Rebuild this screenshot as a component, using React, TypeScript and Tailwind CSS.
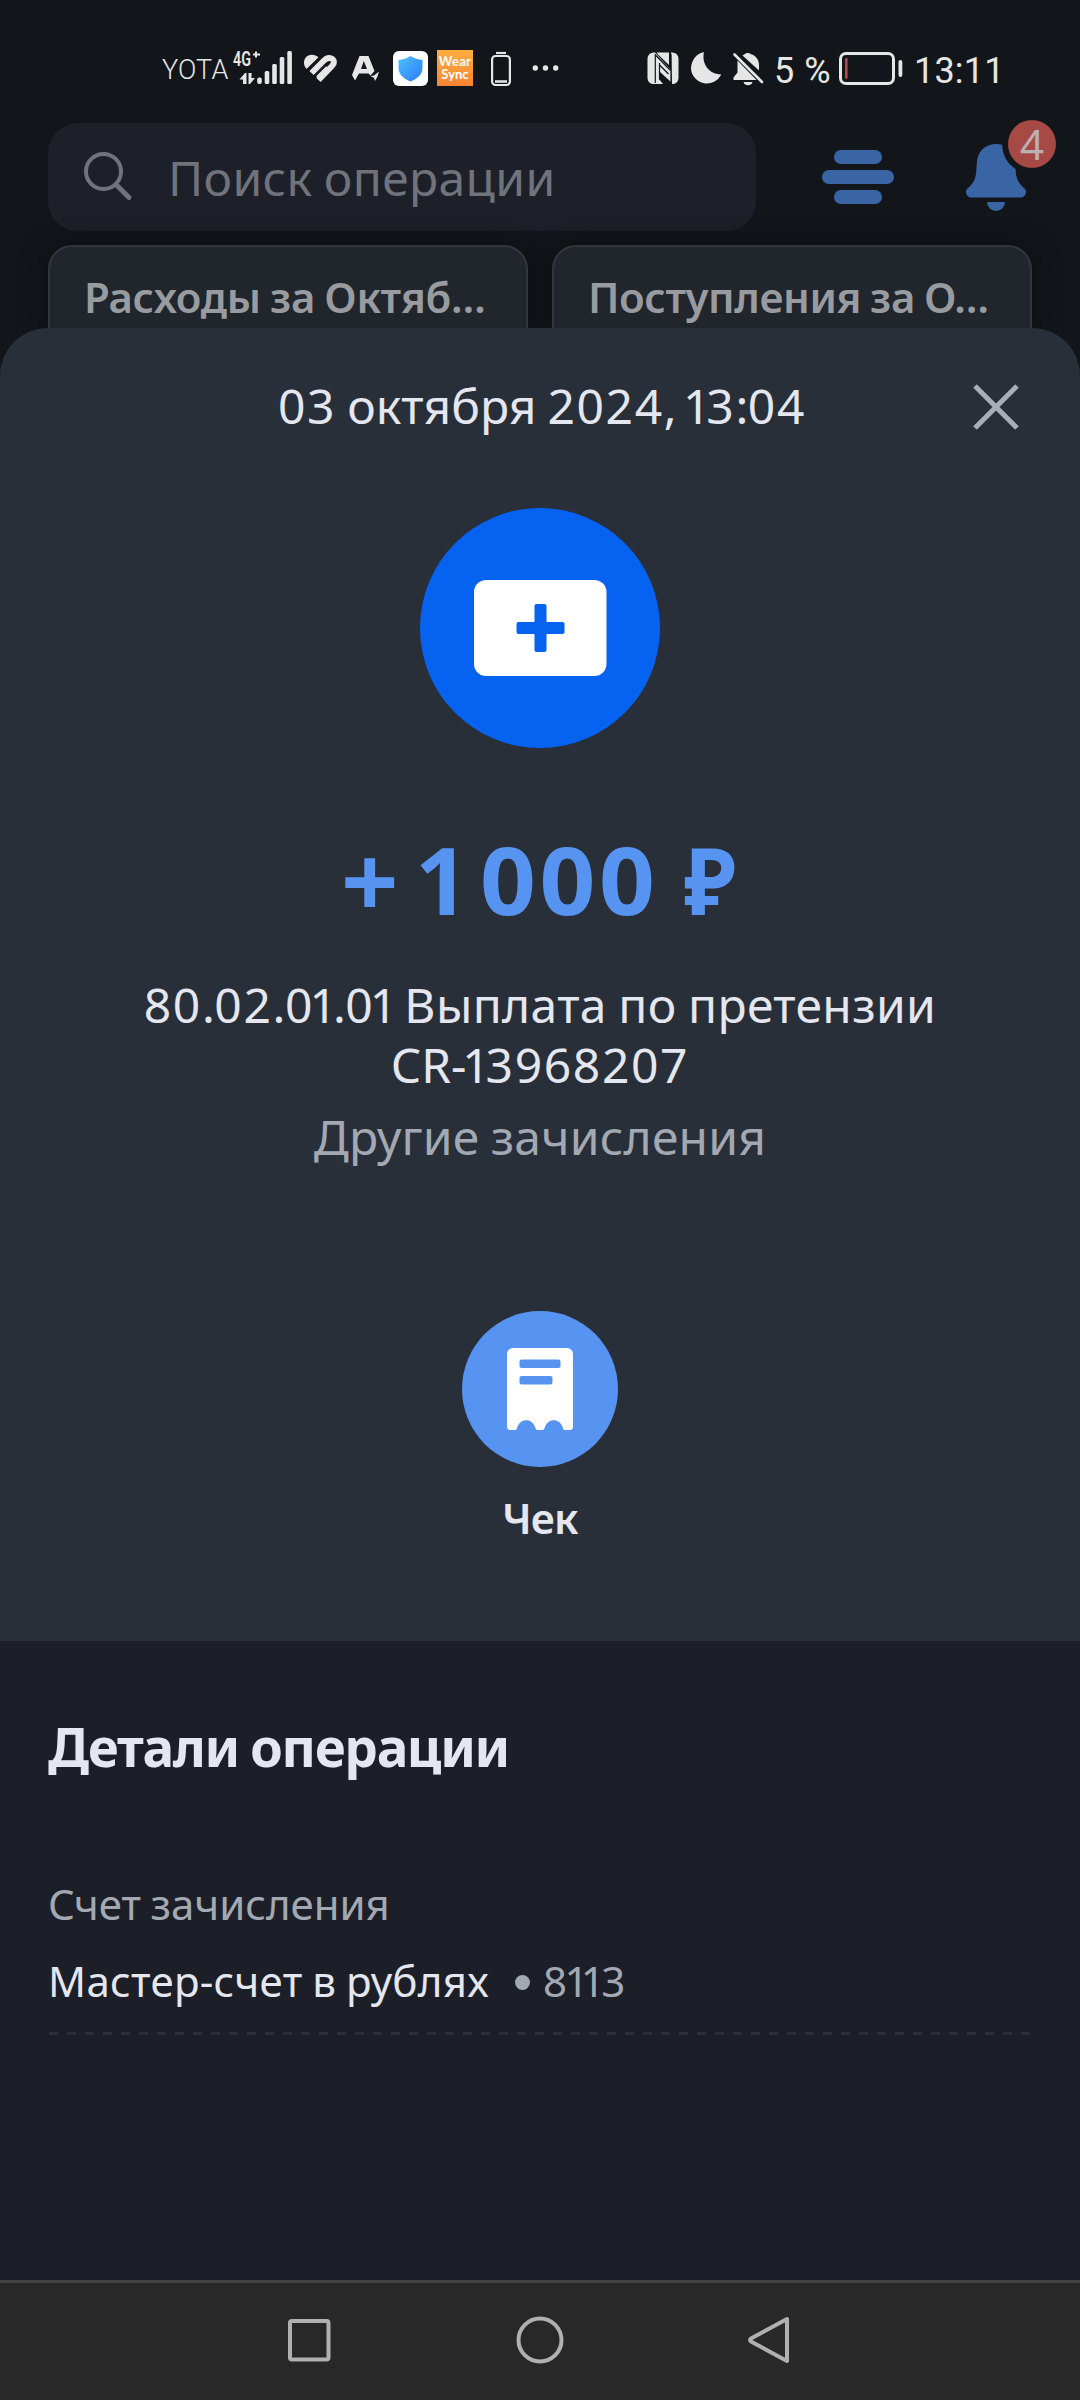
import type { ReactNode } from 'react'

// Figures are slightly spaced, while "1" and punctuation are set tighter.
function trackingFor(char: string, next?: string) {
	if (char === '1') return next === '1' ? 'tracking-[-0.185em]' : 'tracking-[-0.085em]'
	if (/\D/.test(char)) return next === '1' ? 'tracking-[-0.09em]' : 'tracking-[-0.01em]'
	return next === '1' ? 'tracking-[-0.06em]' : ''
}

function Digits({ children }: { children: string }) {
	return (
		<span className="tracking-[0.034em]">
			{children.split('').map((char, i) => {
				const tracking = trackingFor(char, children[i + 1])
				return tracking ? <span key={i} className={tracking}>{char}</span> : char
			})}
		</span>
	)
}

function StatusBar() {
	return (
		<div className="h-[123px] pt-[46px] flex items-start text-[#e6e6e6] font-[Roboto,sans-serif] [word-spacing:normal]">
			<span className="ml-[162px] w-[68px] text-[27px] leading-[48px] font-light tracking-[0.2px]">YOTA</span>
			<svg className="w-[70px] h-[44px]" viewBox="0 0 70 44" fill="currentColor">
				<text x="3" y="20" fontSize="20" fontWeight="600" textLength="18" lengthAdjust="spacingAndGlyphs">4G</text>
				<path d="M26 5.500v6M23 8.500h7" stroke="currentColor" strokeWidth="2" />
				<path d="M9.500 33.500 15 27h1.500v11h-3.500v-4.500zM18.500 27h3v5H25l-5 6h-1.500z" />
				<rect x="27.200" y="31.500" width="4.600" height="6.500" rx="2" />
				<rect x="34.700" y="25" width="4.600" height="13" rx="1.500" />
				<rect x="42.200" y="18" width="4.600" height="20" rx="1.500" />
				<rect x="49.700" y="11" width="4.600" height="27" rx="1.500" />
				<rect x="57.300" y="5" width="4.600" height="33" rx="1.500" />
			</svg>
			<svg className="w-[45px] h-[44px]" viewBox="0 0 45 44" fill="currentColor">
				<path d="M6.500 23C2.500 18.500 3.500 12.500 7.500 10c3.800-2.300 8-1.300 11 1.200z" />
				<path d="M11.500 27 24 14.500c6-6 13.500 0 8 5.500L18.500 34M17 31l10-10" fill="none" stroke="currentColor" strokeWidth="6" />
				<path d="M15.500 29.500 26 19" stroke="#12161a" strokeWidth="2" strokeLinecap="round" />
			</svg>
			<svg className="w-[48px] h-[44px]" viewBox="0 0 48 44" fill="currentColor">
				<path fillRule="evenodd" d="M14.500 10h9l6 15-4 4.500-2-2H14l-4 7L7 29zM18.800 15l-2.800 8h6z" />
				<path d="m25.500 30 3.500-.500 5-4-1.500 5-2.500 4.500-1-3z" />
			</svg>
			<div className="mt-[5px] size-[35px] rounded-md bg-white flex items-center justify-center">
				<svg className="w-[27px] h-[27px]" viewBox="0 0 27 27">
					<defs>
						<linearGradient id="shield" x1="0" y1="0" x2="1" y2="1">
							<stop offset="0" stopColor="#4fc3fb" />
							<stop offset="0.500" stopColor="#3b9efa" />
							<stop offset="1" stopColor="#2c7df6" />
						</linearGradient>
					</defs>
					<path d="M13.500 1c3 2.200 8 3.600 12 4v8c0 6.500-5.500 11-12 13.500C7 24 1.500 19.500 1.500 13V5c4-.400 9-1.800 12-4z" fill="url(#shield)" />
				</svg>
			</div>
			<div className="ml-[9px] mt-[4px] size-[36px] pt-[5px] bg-linear-to-b from-[#fbae42] to-[#f98433] text-white text-center text-[13px] leading-[13px] font-bold font-[Lato,sans-serif]">
				<p className="tracking-[0.3px]">Wear</p>
				<p>Sync</p>
			</div>
			<svg className="ml-[18px] w-[20px] h-[44px]" viewBox="0 0 20 44" fill="none" stroke="currentColor">
				<path d="M5 7h10" strokeWidth="2.200" />
				<rect x="1.100" y="10" width="17.800" height="29" rx="3.500" strokeWidth="2.200" />
				<path d="M4 35.500h12" strokeWidth="2.500" />
			</svg>
			<svg className="ml-[20px] w-[30px] h-[44px]" viewBox="0 0 30 44" fill="currentColor">
				<circle cx="4.300" cy="22" r="2.700" />
				<circle cx="14.500" cy="22" r="2.700" />
				<circle cx="24.700" cy="22" r="2.700" />
			</svg>
			<svg className="ml-[86px] w-[32px] h-[44px]" viewBox="0 0 32 44" fill="currentColor">
				<path d="M6.500 6.500H8L24 24v12L12 25v8l4 5H6.500A6 6 0 0 1 .500 32.500v-20a6 6 0 0 1 6-6z" />
				<path d="M9.500 6.500H22V19l-10.500-10zM24 6.500h1.500a6 6 0 0 1 6 6v20a6 6 0 0 1-6 5.500H25z" />
				<path d="M8.300 8v29M12.500 17v16L25 37.500M24 8v28" stroke="#12161a" strokeWidth="1.200" fill="none" />
				<path d="m9 9.500 14.500 15M12.500 19l9 9" stroke="#12161a" strokeWidth="1.300" fill="none" />
			</svg>
			<svg className="ml-[11px] w-[34px] h-[44px]" viewBox="0 0 34 44" fill="currentColor">
				<path d="M14 6.200C11.500 16 17.500 28 31.300 28.500A16 16 0 0 1 1 23C1 14 7 7 14 6.200z" />
			</svg>
			<svg className="ml-[8px] w-[34px] h-[44px]" viewBox="0 0 34 44" fill="currentColor">
				<path d="M10.500 9.500 13 8c.500-1.500 5-1.500 5.500 0 6 1.500 8.500 6.500 8.500 11v5.500zM5.500 14.500 24.500 34H1.500v-2.500l4-5z" />
				<path d="M2.500 8.500 30 36" stroke="currentColor" strokeWidth="2.600" strokeLinecap="round" />
				<path d="M11.500 36h9c-1 4.300-8 4.300-9 0z" />
			</svg>
			<span className="ml-[8px] w-[65px] text-[36px] leading-[50px] tracking-[0.6px] whitespace-nowrap">5 %</span>
			<svg className="w-[64px] h-[44px]" viewBox="0 0 64 44">
				<rect x="1.500" y="7.500" width="53" height="30" rx="5.500" fill="none" stroke="currentColor" strokeWidth="3" />
				<rect x="6" y="12" width="2.600" height="21" rx="1.200" fill="#c0453a" />
				<rect x="59.500" y="14" width="3.800" height="17" rx="1.900" fill="currentColor" />
			</svg>
			<span className="ml-[11px] text-[36px] leading-[50px] tracking-[0.2px]">13:11</span>
		</div>
	)
}

function SearchHeader() {
	return (
		<div className="h-[108px] pl-[48px] flex items-start">
			<div className="w-[708px] h-[108px] pl-[35px] rounded-[30px] bg-[#1d2028] flex items-center text-[#70737c]">
				<svg className="w-[50px] h-[50px]" viewBox="0 0 50 50" fill="none" stroke="currentColor" strokeWidth="4" strokeLinecap="round">
					<circle cx="20.500" cy="19.500" r="17.500" />
					<path d="m33 32.500 13 13" strokeWidth="5" />
				</svg>
				<span className="ml-[35px] mt-px text-5xl leading-[60px] tracking-[0.35px]">Поиск операции</span>
			</div>
			<div className="ml-[66px] mt-[27px] flex flex-col items-center gap-1.5">
				<span className="w-12 h-[14px] rounded-full bg-[#3965a5]" />
				<span className="w-[72px] h-[14px] rounded-full bg-[#3965a5]" />
				<span className="w-12 h-[14px] rounded-full bg-[#3965a5]" />
			</div>
			<div className="relative ml-[72px] mt-[21px]">
				<svg className="w-[60px] h-[67px]" viewBox="0 0 60 70" preserveAspectRatio="none" fill="#3965a5">
					<path d="M30 0c2.200 0 4.300.200 6.200.800C36.500 12 41 20 49.500 26c.700 9 1.500 13.500 8.500 20 1.500 1.400 2 2.500 2 4.500a5.500 5.500 0 0 1-5.500 5.500h-49A5.500 5.500 0 0 1 0 50.500c0-2 .500-3.100 2-4.500 8.500-8 8-13 8.800-26C11.300 8 19 0 30 0z" />
					<path d="M21 60.500h18a9 9.500 0 0 1-18 0z" />
				</svg>
				<span className="absolute left-[42px] -top-[24px] size-12 rounded-full bg-[#a74945] text-[#bdb0b3] text-[42px] leading-[48px] text-center">4</span>
			</div>
		</div>
	)
}

function SummaryCard({ children }: { children: ReactNode }) {
	return (
		<div className="w-[480px] h-[83px] pl-[34px] pt-[20px] rounded-t-3xl border-2 border-b-0 border-[#33373d] bg-[#21252c] text-[#989ba0] text-[42px] leading-[60px] font-semibold whitespace-nowrap shadow-[0_0_24px_#0c0e11]">
			{children}
		</div>
	)
}

function OperationSheet() {
	return (
		<div className="relative h-[1313px] pt-[48px] rounded-t-[48px] bg-[#282f39] flex flex-col items-center text-[#e4e6f0] text-5xl leading-[60px]">
			<div className="w-full pl-[278px] pr-[61px] flex items-center justify-between">
				<h1 className="whitespace-nowrap"><Digits>03</Digits> октября <Digits>2024, 13:04</Digits></h1>
				<button aria-label="Закрыть" className="mt-px">
					<svg className="w-[46px] h-[46px]" viewBox="0 0 46 46" fill="none" stroke="#a9afb9" strokeWidth="5">
						<path d="M2 2 44 44M44 2 2 44" />
					</svg>
				</button>
			</div>

			<div className="mt-[72px] size-60 shrink-0 rounded-full bg-[#0663f2] flex items-center justify-center">
				<svg className="w-[133px] h-[96px]" viewBox="0 0 133 96">
					<rect width="132.500" height="96" rx="12" fill="#fff" />
					<rect x="42.500" y="42" width="48" height="12" rx="2" fill="#0663f2" />
					<rect x="60.500" y="24" width="12" height="48" rx="2" fill="#0663f2" />
				</svg>
			</div>

			<p className="mt-[81px] w-full pl-[343px] flex text-[94px] leading-[100px] font-bold text-[#5794f1]">
				<span className="w-[72px] pr-[18px] text-center"><span className="inline-block scale-[1.07]">+</span></span>
				<span className="w-[65px]">1</span>
				<span className="w-[204px] tracking-[3.5px] origin-left scale-x-[1.04]">000</span>
				<span className="origin-left scale-x-[0.92]">₽</span>
			</p>

			<p className="mt-[46px] text-center">
				<Digits>80.02.01.01</Digits> <span className="tracking-[0.35px]">Выплата по претензии</span>
				<br />
				CR<Digits>-13968207</Digits>
			</p>
			<p className="mt-[12px] text-[#a3a9b3] tracking-[0.2px]">Другие зачисления</p>

			<button className="mt-[144px] flex flex-col items-center">
				<span className="size-[156px] rounded-full bg-[#5794f1] flex items-center justify-center">
					<svg className="w-[66px] h-[82px]" viewBox="0 0 66 82">
						<path d="M6 0h54a6 6 0 0 1 6 6v73.500a3 3 0 0 1-3 2.500h-5c-1.500 0-1.700-1-2-2-3-10.500-15.500-10.500-18.500 0-.300 1-.700 2-2 2h-5c-1.300 0-1.700-1-2-2-3-10.500-15.500-10.500-18.500 0-.300 1-.700 2-2 2H3a3 3 0 0 1-3-2.500V6a6 6 0 0 1 6-6z" fill="#fff" />
						<rect x="12.500" y="11.500" width="41" height="8.500" rx="2" fill="#5794f1" />
						<rect x="12.500" y="28" width="33" height="8.500" rx="2" fill="#5794f1" />
					</svg>
				</span>
				<span className="mt-[21px] text-[42px] font-semibold tracking-[-0.8px]">Чек</span>
			</button>
		</div>
	)
}

function OperationDetails() {
	return (
		<div className="h-[639px] px-12 pt-[76px] bg-[#1c1f27] text-[#e4e6f0] leading-[60px]">
			<h2 className="text-[53px] leading-[60px] font-bold tracking-[-1.3px]">Детали операции</h2>
			<p className="mt-[97px] text-[42px] leading-[60px] text-[#a3a9b3]">Счет зачисления</p>
			<div className="mt-[17px] flex items-center text-[42px] leading-[60px]">
				<span className="tracking-[0.3px]">Мастер-счет в рублях</span>
				<span className="ml-[26px] mt-[2px] size-[15px] rounded-full bg-[#a3a9b3]" />
				<span className="ml-[13px] text-[#a3a9b3]"><Digits>8113</Digits></span>
			</div>
			<div className="mt-[21px] ml-px h-[3px] bg-[repeating-linear-gradient(to_right,#2a303a_0_9px,transparent_9px_18px)]" />
		</div>
	)
}

function NavigationBar() {
	return (
		<div className="h-[120px] pb-[3px] border-t-3 border-[#424244] bg-[#282828] flex items-center justify-center gap-[181px]">
			<svg className="w-[50px] h-[50px]" viewBox="0 0 50 50" fill="none" stroke="#b0b0b0" strokeWidth="4">
				<rect x="6" y="6" width="38.500" height="38.500" rx="2" />
			</svg>
			<svg className="w-[50px] h-[50px]" viewBox="0 0 50 50" fill="none" stroke="#b0b0b0" strokeWidth="4">
				<circle cx="25" cy="25" r="21.500" />
			</svg>
			<svg className="w-[50px] h-[50px]" viewBox="0 0 50 50" fill="none" stroke="#b0b0b0" strokeWidth="4" strokeLinejoin="round">
				<path d="M41 4v42L5 26.500Q3 25 5 23.500z" />
			</svg>
		</div>
	)
}

export default function App() {
	return (
		<div className="w-[1080px] h-[2400px] overflow-hidden bg-[#12161a] font-['Noto_Sans',sans-serif] [word-spacing:-1.4px]">
			<StatusBar />
			<SearchHeader />
			<div className="mt-[14px] pl-12 flex gap-6">
				<SummaryCard><span className="tracking-[-0.3px]">Расходы за Октяб…</span></SummaryCard>
				<SummaryCard><span className="tracking-[-0.43px]">Поступления за О…</span></SummaryCard>
			</div>
			<OperationSheet />
			<OperationDetails />
			<NavigationBar />
		</div>
	)
}
